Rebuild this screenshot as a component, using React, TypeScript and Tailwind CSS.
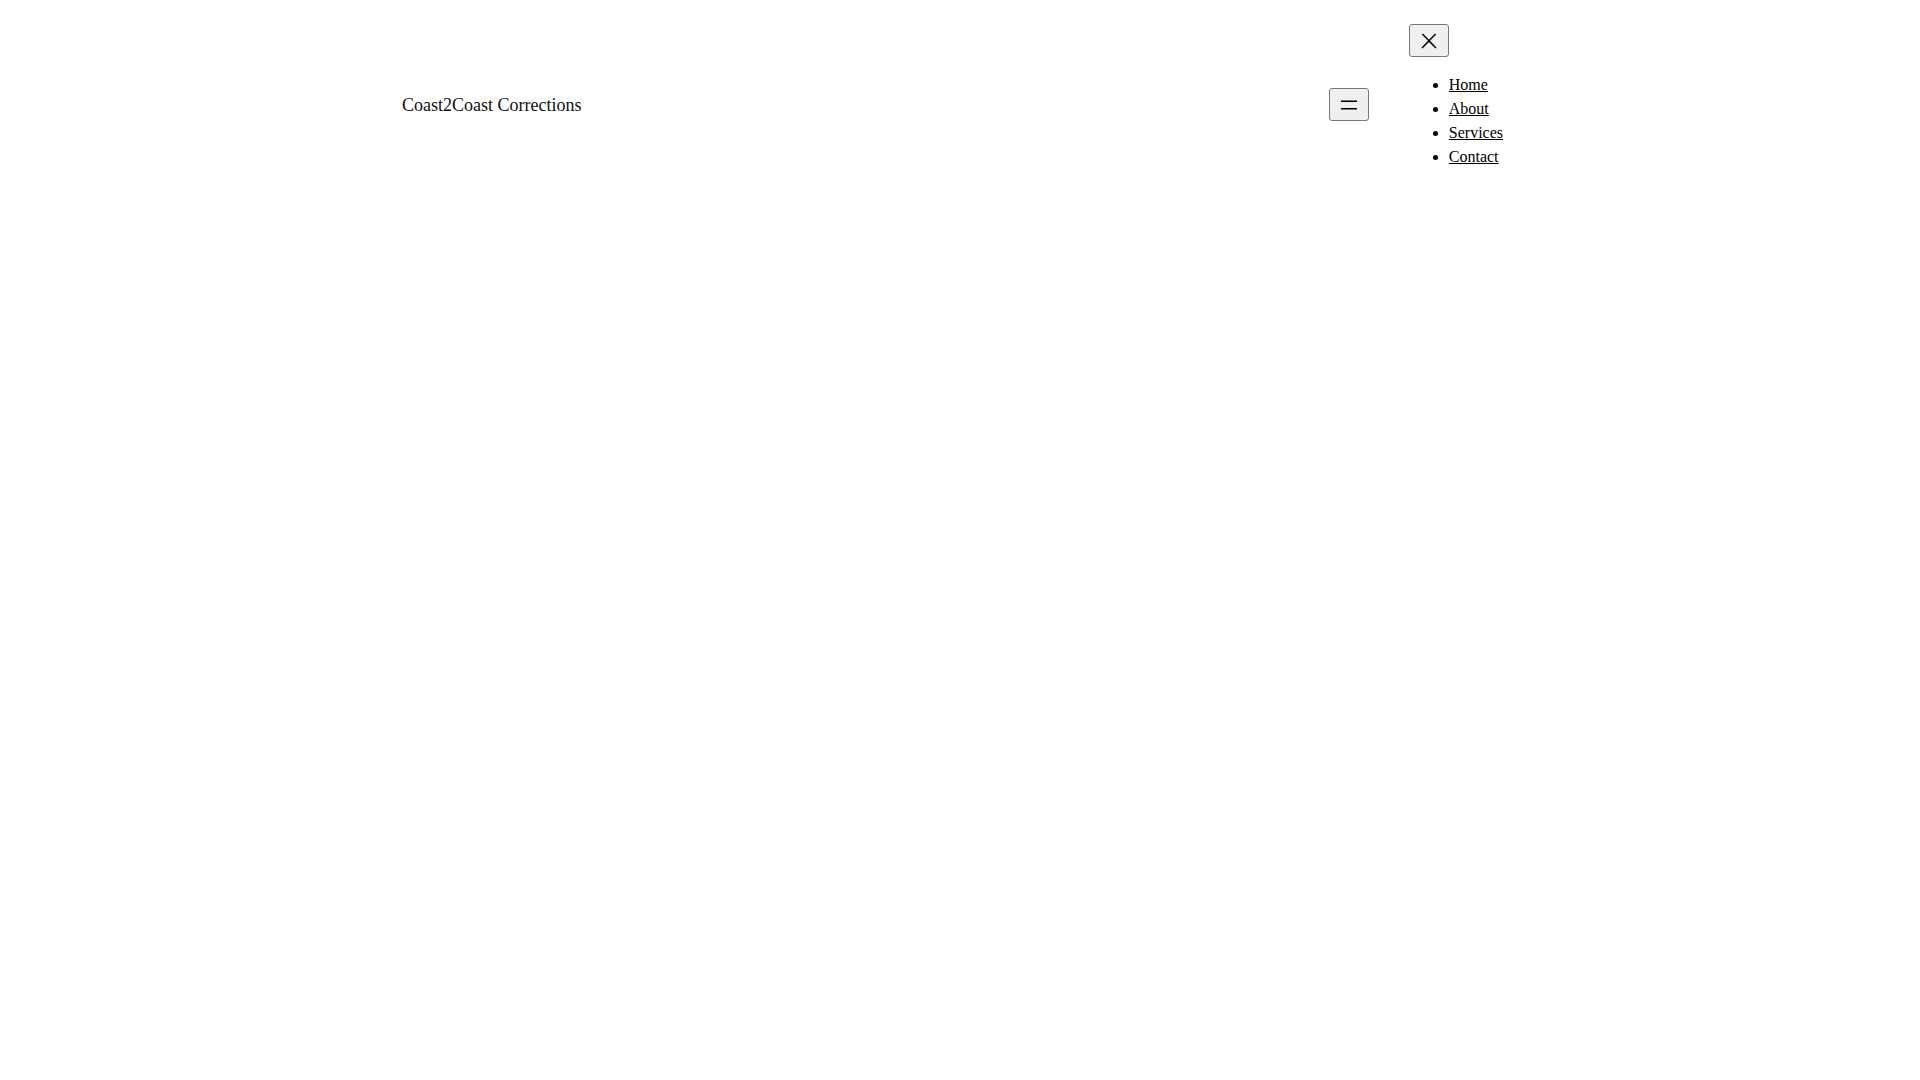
import React, { useState } from 'react';

const navLinks = ['Home', 'About', 'Services', 'Contact'];

function OpenIcon() {
  return (
    <svg width="24" height="24" viewBox="0 0 24 24" fill="currentColor" aria-hidden="true">
      <rect x="4" y="7.5" width="16" height="1.5" />
      <rect x="4" y="15" width="16" height="1.5" />
    </svg>
  );
}

function CloseIcon() {
  return (
    <svg width="24" height="24" viewBox="0 0 24 24" fill="currentColor" aria-hidden="true">
      <path d="M13 11.8l6.1-6.3-1-1-6.1 6.2-6.1-6.2-1 1 6.1 6.3-6.5 6.7 1 1 6.5-6.6 6.5 6.6 1-1z" />
    </svg>
  );
}

export default function App() {
  const [menuOpen, setMenuOpen] = useState(true);

  return (
    <div className="min-h-[2786px] pr-[15px] bg-white text-black font-['Liberation_Serif',serif] text-base leading-6">
      {/* Header */}
      <header className="pt-[24px]">
        <div className="w-[1101px] mx-auto flex items-center justify-between">
          <p className="text-[18px] text-[#111]">
            <a href="#">Coast2Coast Corrections</a>
          </p>

          <nav className="flex items-center gap-10">
            <button
              onClick={() => setMenuOpen(true)}
              className="w-10 h-[33px] flex items-center justify-center bg-[#efefef] border border-[#767676] rounded-[3px] text-black"
              aria-label="Open menu"
            >
              <OpenIcon />
            </button>

            {menuOpen && (
              <div className="flex flex-col items-start">
                <button
                  onClick={() => setMenuOpen(false)}
                  className="w-10 h-[33px] flex items-center justify-center bg-[#efefef] border border-[#767676] rounded-[3px] text-black"
                  aria-label="Close menu"
                >
                  <CloseIcon />
                </button>
                <ul className="list-disc pl-10 my-4">
                  {navLinks.map(link => (
                    <li key={link}>
                      <a href="#" className="underline text-black">{link}</a>
                    </li>
                  ))}
                </ul>
              </div>
            )}
          </nav>
        </div>
      </header>

      <main />
    </div>
  );
}
